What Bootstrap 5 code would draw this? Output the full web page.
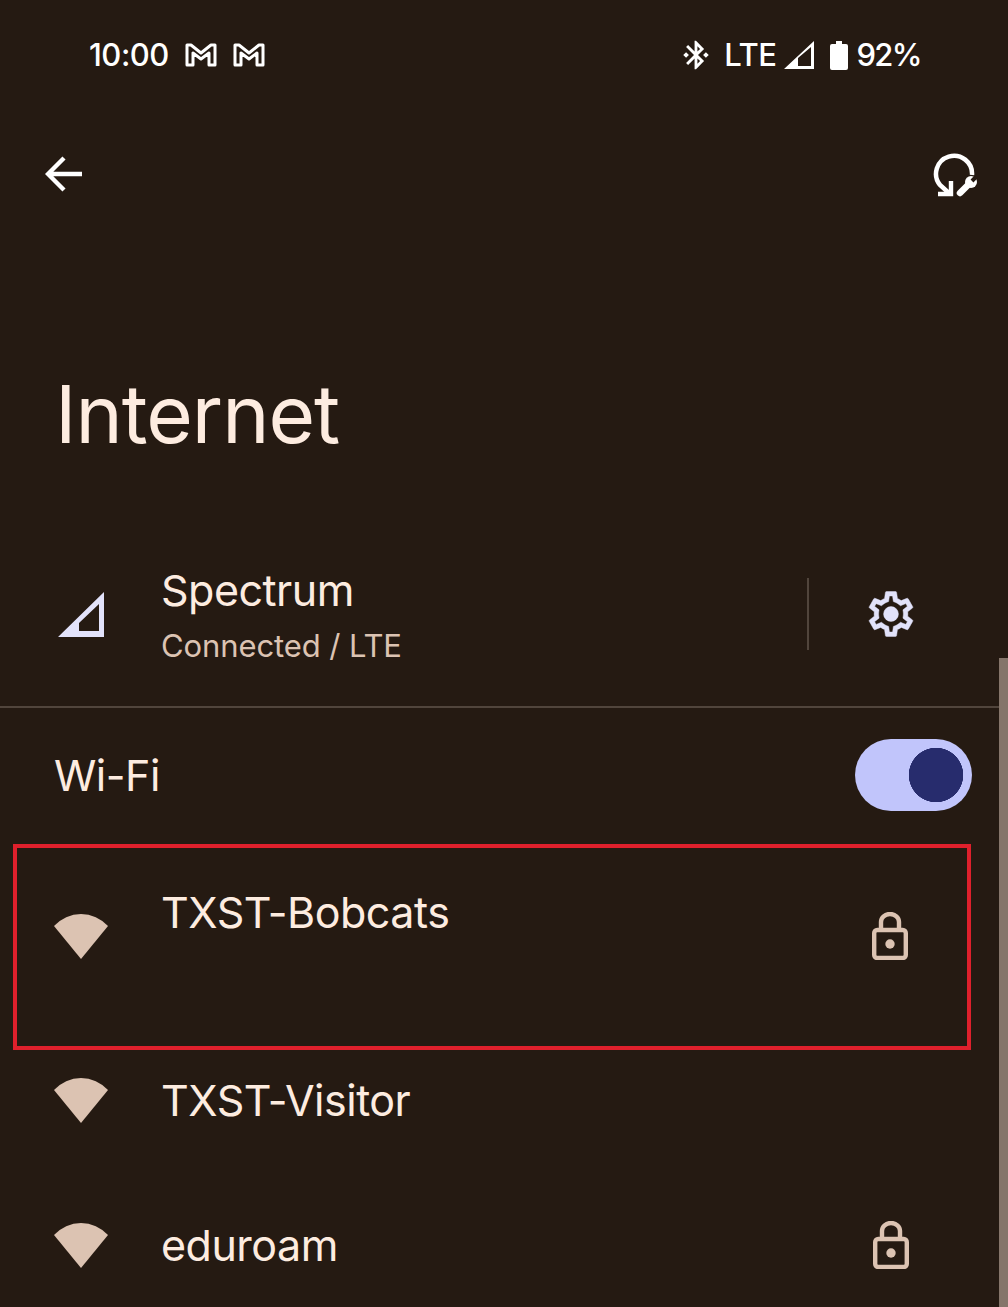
<!DOCTYPE html>
<html lang="en">
<head>
  <meta charset="UTF-8">
  <meta name="viewport" content="width=device-width, initial-scale=1.0">
  <title>Internet</title>
  <link href="https://cdn.jsdelivr.net/npm/bootstrap@5.3.0/dist/css/bootstrap.min.css" rel="stylesheet">
  <style>
    html, body {
      background-color: #251a12;
    }
    body {
      font-family: Inter, "Liberation Sans", sans-serif;
      color: #fdece0;
    }
    .phone-screen {
      position: relative;
      height: 1307px;
      overflow: hidden;
    }
    .status-strip {
      height: 110px;
      padding: 0 87px 0 89px;
      font-size: 31px;
      font-weight: 500;
      letter-spacing: -.5px;
      color: #fff;
    }
    .lte-label {
      margin-left: 11px;
    }
    .battery-pct {
      letter-spacing: -1.6px;
    }
    .tool-strip {
      height: 128px;
      padding: 0 31px 0 45px;
    }
    .page-heading {
      margin: 0;
      padding: 116px 0 86px 55px;
      font-size: 80px;
      font-weight: 400;
      line-height: 120px;
      letter-spacing: -1px;
      color: #fdece0;
    }
    .row-title {
      font-size: 43px;
      line-height: 56px;
      letter-spacing: -.5px;
    }
    .row-sub {
      font-size: 31px;
      line-height: 56px;
      letter-spacing: -.1px;
      color: #dcc3b2;
    }
    .icon-slot {
      width: 161px;
      padding-left: 54px;
      flex-shrink: 0;
    }
    .end-slot {
      width: 164px;
      flex-shrink: 0;
    }
    .carrier-row {
      height: 108px;
      margin-bottom: 38px;
      padding-right: 35px;
    }
    .carrier-text {
      padding-top: 7px;
    }
    .carrier-rule {
      width: 2px;
      height: 72px;
      background-color: #51453c;
    }
    .page-rule {
      height: 2px;
      background-color: #51453c;
    }
    .wifi-row {
      height: 134px;
      padding: 0 36px 0 54px;
    }
    .wifi-toggle.form-check-input {
      width: 117px;
      height: 72px;
      margin: 0;
      border: 0;
      background-color: #c1c5fb;
      background-image: radial-gradient(circle at 81px 36px, #272c6d 27px, transparent 27.5px);
      background-position: 0 0;
      background-size: 117px 72px;
    }
    .form-switch .wifi-toggle.form-check-input {
      width: 117px;
      margin: 0;
      border-radius: 36px;
    }
    .picked-box {
      height: 206px;
      margin: 2px 37px 0 13px;
      border: 4px solid #df202c;
    }
    .picked-box .icon-slot {
      width: 144px;
      padding-left: 37px;
      padding-bottom: 22px;
    }
    .picked-text {
      padding-top: 36px;
    }
    .picked-end {
      width: 155px;
      padding-bottom: 22px;
    }
    .net-row {
      height: 100px;
      padding-right: 35px;
    }
    .net-row-last {
      height: 144px;
      margin-top: 23px;
    }
    .page-scroll {
      position: absolute;
      top: 658px;
      right: 0;
      bottom: 0;
      width: 9px;
      background-color: #85756a;
    }
  </style>
</head>
<body>
  <div class="phone-screen">

    <div class="status-strip d-flex align-items-center justify-content-between">
      <div class="d-flex align-items-center">
        <span>10:00</span>
        <svg class="ms-3" width="32" height="24" viewBox="0 0 32 24"><path d="M2 2h4l10 8 10-8h4v20h-6V10l-8 6-8-6v12H2z" fill="none" stroke="#fff" stroke-width="3" stroke-linejoin="round"/></svg>
        <svg class="ms-3" width="32" height="24" viewBox="0 0 32 24"><path d="M2 2h4l10 8 10-8h4v20h-6V10l-8 6-8-6v12H2z" fill="none" stroke="#fff" stroke-width="3" stroke-linejoin="round"/></svg>
      </div>
      <div class="d-flex align-items-center">
        <svg width="34" height="34" viewBox="0 0 24 24" fill="#fff"><path d="M7 12l-2-2-2 2 2 2 2-2zm10.71-4.29L12 2h-1v7.59L6.41 5 5 6.41 10.59 12 5 17.59 6.41 19 11 14.41V22h1l5.71-5.71-4.3-4.29 4.3-4.29zM13 5.83l1.88 1.88L13 9.59V5.83zm1.88 10.46L13 18.17v-3.76l1.88 1.88zM19 10l-2 2 2 2 2-2-2-2z"/></svg>
        <span class="lte-label">LTE</span>
        <svg class="ms-2" width="30" height="28" viewBox="0 0 30 28" fill="#fff"><path fill-rule="evenodd" d="M0 28L30 0v28zM14 25h13V6L14 17z"/></svg>
        <svg class="ms-3" width="18" height="29" viewBox="0 0 18 29" fill="#fff"><path d="M6 0h6v3h4a2 2 0 0 1 2 2v22a2 2 0 0 1-2 2H2a2 2 0 0 1-2-2V5a2 2 0 0 1 2-2h4z"/></svg>
        <span class="ms-2 battery-pct">92%</span>
      </div>
    </div>

    <div class="tool-strip d-flex align-items-center justify-content-between">
      <svg width="37" height="36" viewBox="0 0 37 36" fill="none" stroke="#fff" stroke-width="4.4"><path d="M37 18H3M19 2L3 18l16 16"/></svg>
      <svg width="45" height="45" viewBox="0 0 45 45">
        <path d="M18 42L8 33A18 18 0 1 1 40 23" fill="none" stroke="#fff" stroke-width="4.5"/>
        <path d="M6 42h13V29" fill="none" stroke="#fff" stroke-width="4.4"/>
        <path d="M28 41l11-11" stroke="#fff" stroke-width="6.5" stroke-linecap="round"/>
        <circle cx="39" cy="30" r="6" fill="#fff"/>
        <path d="M40 29l6-6" stroke="#251a12" stroke-width="4"/>
      </svg>
    </div>

    <h1 class="page-heading">Internet</h1>

    <div class="carrier-row d-flex align-items-center">
      <div class="icon-slot">
        <svg class="d-block ms-1" width="46" height="45" viewBox="0 0 46 45" fill="#e2e2fa"><path fill-rule="evenodd" d="M0 45L46 0v45zM21 39h20V12L21 31z"/></svg>
      </div>
      <div class="flex-grow-1 carrier-text">
        <div class="row-title">Spectrum</div>
        <div class="row-sub">Connected / LTE</div>
      </div>
      <div class="carrier-rule"></div>
      <div class="end-slot d-flex justify-content-center">
        <svg width="54" height="54" viewBox="0 0 24 24" fill="#e2e2fa" stroke="#e2e2fa" stroke-width=".2"><path d="M19.43 12.98c.04-.32.07-.64.07-.98 0-.34-.03-.66-.07-.98l2.11-1.65c.19-.15.24-.42.12-.64l-2-3.46c-.09-.16-.26-.25-.44-.25-.06 0-.12.01-.17.03l-2.49 1c-.52-.4-1.08-.73-1.69-.98l-.38-2.65C14.46 2.18 14.25 2 14 2h-4c-.25 0-.46.18-.49.42l-.38 2.65c-.61.25-1.17.59-1.69.98l-2.49-1c-.06-.02-.12-.03-.18-.03-.17 0-.34.09-.43.25l-2 3.46c-.13.22-.07.49.12.64l2.11 1.65c-.04.32-.07.65-.07.98 0 .33.03.66.07.98l-2.11 1.65c-.19.15-.24.42-.12.64l2 3.46c.09.16.26.25.44.25.06 0 .12-.01.17-.03l2.49-1c.52.4 1.08.73 1.69.98l.38 2.65c.03.24.24.42.49.42h4c.25 0 .46-.18.49-.42l.38-2.65c.61-.25 1.17-.59 1.69-.98l2.49 1c.06.02.12.03.18.03.17 0 .34-.09.43-.25l2-3.46c.12-.22.07-.49-.12-.64l-2.11-1.65zm-1.98-1.71c.04.31.05.52.05.73 0 .21-.02.43-.05.73l-.14 1.13.89.7 1.08.84-.7 1.21-1.27-.51-1.04-.42-.9.68c-.43.32-.84.56-1.25.73l-1.06.43-.16 1.13-.2 1.35h-1.4l-.19-1.35-.16-1.13-1.06-.43c-.43-.18-.83-.41-1.23-.71l-.91-.7-1.06.43-1.27.51-.7-1.21 1.08-.84.89-.7-.14-1.13c-.03-.31-.05-.54-.05-.74s.02-.43.05-.73l.14-1.13-.89-.7-1.08-.84.7-1.21 1.27.51 1.04.42.9-.68c.43-.32.84-.56 1.25-.73l1.06-.43.16-1.13.2-1.35h1.39l.19 1.35.16 1.13 1.06.43c.43.18.83.41 1.23.71l.91.7 1.06-.43 1.27-.51.7 1.21-1.07.85-.89.7.14 1.13z"/><circle cx="12" cy="12" r="3.3"/></svg>
      </div>
    </div>

    <div class="page-rule"></div>

    <div class="wifi-row d-flex align-items-center justify-content-between">
      <span class="row-title">Wi-Fi</span>
      <div class="form-check form-switch m-0 p-0 d-flex">
        <input class="form-check-input wifi-toggle" type="checkbox" role="switch" checked aria-label="Wi-Fi">
      </div>
    </div>

    <div class="picked-box d-flex align-items-center">
      <div class="icon-slot">
        <svg class="d-block" width="54" height="45" viewBox="0 0 54 45" fill="#dcc3b2"><path d="M0 12A36.4 36.4 0 0 1 54 12L27 45z"/></svg>
      </div>
      <div class="flex-grow-1 align-self-start picked-text">
        <div class="row-title">TXST-Bobcats</div>
      </div>
      <div class="picked-end d-flex justify-content-center">
        <svg width="36" height="48" viewBox="0 0 36 48" fill="none" stroke="#dcc3b2" stroke-width="4.4"><rect x="2.2" y="18" width="31.6" height="28" rx="3"/><path d="M9 18V10a9 8 0 0 1 18 0v8"/><circle cx="18" cy="32" r="4.7" fill="#dcc3b2" stroke="none"/></svg>
      </div>
    </div>

    <div class="net-row d-flex align-items-center">
      <div class="icon-slot">
        <svg class="d-block" width="54" height="45" viewBox="0 0 54 45" fill="#dcc3b2"><path d="M0 12A36.4 36.4 0 0 1 54 12L27 45z"/></svg>
      </div>
      <div class="row-title flex-grow-1">TXST-Visitor</div>
    </div>

    <div class="net-row net-row-last d-flex align-items-center">
      <div class="icon-slot">
        <svg class="d-block" width="54" height="45" viewBox="0 0 54 45" fill="#dcc3b2"><path d="M0 12A36.4 36.4 0 0 1 54 12L27 45z"/></svg>
      </div>
      <div class="row-title flex-grow-1">eduroam</div>
      <div class="end-slot d-flex justify-content-center">
        <svg width="36" height="48" viewBox="0 0 36 48" fill="none" stroke="#dcc3b2" stroke-width="4.4"><rect x="2.2" y="18" width="31.6" height="28" rx="3"/><path d="M9 18V10a9 8 0 0 1 18 0v8"/><circle cx="18" cy="32" r="4.7" fill="#dcc3b2" stroke="none"/></svg>
      </div>
    </div>

    <div class="page-scroll"></div>
  </div>

  <script src="https://cdn.jsdelivr.net/npm/bootstrap@5.3.0/dist/js/bootstrap.bundle.min.js"></script>
</body>
</html>
